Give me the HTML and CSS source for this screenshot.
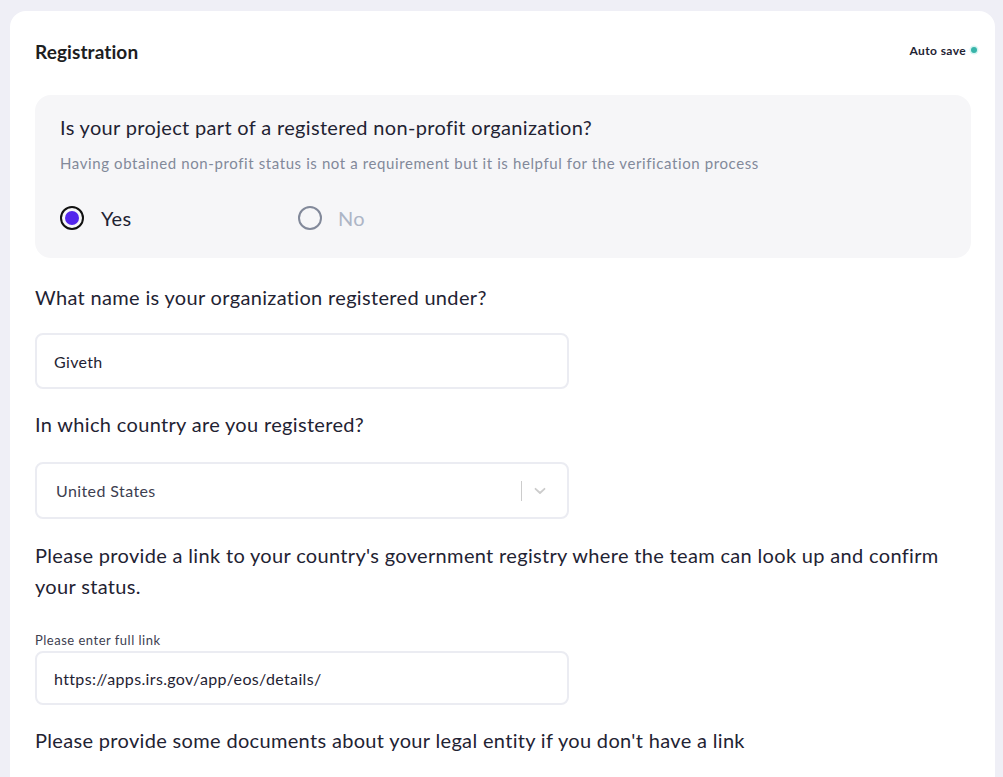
FILE: index.html
```html
<!DOCTYPE html>
<html lang="en">
<head>
<meta charset="utf-8">
<title>Registration</title>
<link rel="stylesheet" href="styles.css">
</head>
<body>
<main class="card">
  <header class="card-head">
    <h1 class="title">Registration</h1>
    <div class="autosave">Auto save <span class="dot"></span></div>
  </header>

  <section class="question-box">
    <p class="question">Is your project part of a registered non-profit organization?</p>
    <p class="helper">Having obtained non-profit status is not a requirement but it is helpful for the verification process</p>
    <div class="radios">
      <label class="radio checked"><span class="circle"><span class="inner"></span></span>Yes</label>
      <label class="radio muted"><span class="circle"></span>No</label>
    </div>
  </section>

  <p class="field-label first">What name is your organization registered under?</p>
  <div class="input">Giveth</div>

  <p class="field-label second">In which country are you registered?</p>
  <div class="select">
    <span class="select-value">United States</span>
    <span class="select-ind">
      <span class="sep"></span>
      <svg class="chev" width="12" height="8" viewBox="0 0 12 8"><path d="M1.5 1.8 L6 6 L10.5 1.8" fill="none" stroke="#cccccc" stroke-width="1.8" stroke-linecap="round" stroke-linejoin="round"/></svg>
    </span>
  </div>

  <p class="field-label para">Please provide a link to your country's government registry where the team can look up and confirm your status.</p>
  <p class="small-label">Please enter full link</p>
  <div class="input input-link">https://apps.irs.gov/app/eos/details/</div>

  <p class="field-label last">Please provide some documents about your legal entity if you don't have a link</p>
</main>
</body>
</html>
```

FILE: styles.css
```css
* { box-sizing: border-box; }
html, body { height: 100%; }
body {
  margin: 0;
  padding: 11px 8px 0 10px;
  background: #efeff6;
  font-family: "Lato", "Noto Sans", sans-serif;
  color: #1f2333;
  overflow: hidden;
}
p { margin: 0; }
.card {
  width: 985px;
  min-height: 900px;
  background: #ffffff;
  border-radius: 16px 16px 0 0;
  padding: 29px 24px 0 25px;
}
.card-head {
  display: flex;
  justify-content: space-between;
  align-items: center;
  margin-right: -6px;
  height: 24px;
}
.title {
  margin: 0;
  font-size: 19px;
  font-weight: 700;
  line-height: 24px;
  color: #1d1e1f;
  font-family: "Lato", sans-serif;
  letter-spacing: 0.1px;
}
.autosave {
  font-size: 12px;
  font-weight: 700;
  letter-spacing: 0.4px;
  color: #1f2333;
  display: flex;
  align-items: center;
  gap: 5px;
  margin-top: -4px;
}
.dot {
  width: 6px;
  height: 6px;
  border-radius: 50%;
  background: #37b4a9;
  box-shadow: 0 0 0 1.5px #d6f5f2;
}
.question-box {
  margin-top: 31px;
  background: #f6f6f8;
  border-radius: 16px;
  padding: 19px 24px 28px 25px;
}
.question {
  font-size: 20px;
  line-height: 26px;
  letter-spacing: 0.33px;
}
.helper {
  margin-top: 13px;
  font-size: 15px;
  line-height: 20px;
  letter-spacing: 0.6px;
  color: #82899a;
}
.radios {
  margin-top: 33px;
  display: flex;
}
.radio {
  width: 238px;
  display: flex;
  align-items: center;
  gap: 17px;
  font-size: 20px;
  line-height: 24px;
  letter-spacing: 0.3px;
}
.circle {
  width: 24px;
  height: 24px;
  border-radius: 50%;
  border: 2px solid #111111;
  display: flex;
  align-items: center;
  justify-content: center;
  flex: none;
}
.inner {
  width: 14px;
  height: 14px;
  border-radius: 50%;
  background: #5326ec;
}
.radio.muted { color: #adb5c6; gap: 16px; }
.radio.muted .circle { border-color: #82899a; }
.field-label {
  font-size: 20px;
  line-height: 26px;
  letter-spacing: 0.33px;
}
.field-label.first { margin-top: 26px; }
.field-label.second { margin-top: 22px; }
.input {
  margin-top: 23px;
  width: 534px;
  height: 56px;
  border: 2px solid #ebecf2;
  border-radius: 8px;
  padding: 0 17px;
  display: flex;
  align-items: center;
  font-size: 16px;
  letter-spacing: 0.35px;
  color: #1f2333;
}
.select {
  margin-top: 25px;
  width: 534px;
  height: 57px;
  border: 2px solid #ebecf2;
  border-radius: 8px;
  padding: 0 0 0 19px;
  display: flex;
  align-items: center;
  justify-content: space-between;
  font-size: 16px;
  letter-spacing: 0.4px;
  color: #3d4050;
}
.select-ind {
  display: flex;
  align-items: center;
  height: 100%;
}
.sep {
  width: 1px;
  height: 20px;
  background: #cccccc;
}
.chev { margin: 0 21px 0 12px; }
.field-label.para {
  margin-top: 21px;
  line-height: 31px;
  max-width: 936px;
}
.small-label {
  margin-top: 30px;
  font-size: 13px;
  line-height: 16px;
  letter-spacing: 0.5px;
  color: #3d4050;
}
.input-link { margin-top: 3px; height: 54px; }
.field-label.last { margin-top: 22px; }
```
